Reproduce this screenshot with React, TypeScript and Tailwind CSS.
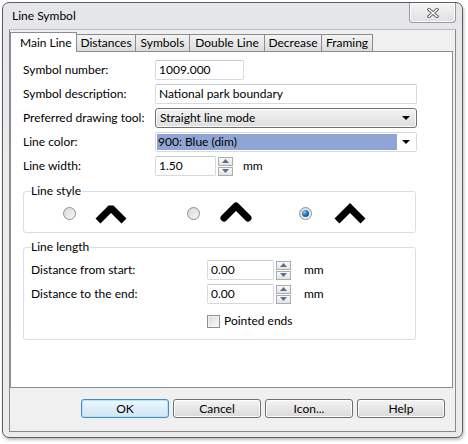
import React from "react";

const tabs = ["Main Line", "Distances", "Symbols", "Double Line", "Decrease", "Framing"];
const tabWidths = ["w-[67px]", "w-[60px]", "w-[55px]", "w-[76px]", "w-[58px]", "w-[52px]"];

const SpinButton = ({ up }: { up?: boolean }) => (
  <div className="w-[15px] h-[9px] border border-[#acacac] bg-linear-to-b from-[#fafafa] to-[#e4e4e4] flex items-center justify-center">
    <svg width="7" height="4" viewBox="0 0 7 4">
      <path d={up ? "M0 4 L3.5 0 L7 4Z" : "M0 0 L3.5 4 L7 0Z"} fill="#5a6e92" />
    </svg>
  </div>
);

const Spinner = () => (
  <div className="flex flex-col gap-[1px] ml-[2px]">
    <SpinButton up />
    <SpinButton />
  </div>
);

const TextBox = ({ value, className }: { value: string; className: string }) => (
  <div
    className={`h-[20px] border border-[#d6dae0] border-t-[#c3c7ce] bg-white pl-[3px] flex items-center rounded-[2px] ${className}`}
  >
    {value}
  </div>
);

const Radio = ({ checked }: { checked?: boolean }) => (
  <div className="w-[13px] h-[13px] rounded-full border border-[#8f8f8f] bg-linear-to-br from-[#d8d8d8] to-[#f8f8f8] flex items-center justify-center shrink-0">
    {checked && (
      <div className="w-[7px] h-[7px] rounded-full bg-radial-[at_35%_30%] from-[#7fd0ff] via-[#1a6fb8] to-[#0b3f75]" />
    )}
  </div>
);

// the three join styles: bevel, round, miter
const Chevron = ({ join }: { join: "bevel" | "round" | "miter" }) => (
  <svg width="36" height="24" viewBox="0 0 36 24" className="shrink-0">
    <polyline
      points={join === "round" ? "6,18 18,6 30,18" : "5,20 18,7 31,20"}
      fill="none"
      stroke="#000"
      strokeWidth="7"
      strokeLinejoin={join}
      strokeLinecap={join === "round" ? "round" : "butt"}
      strokeMiterlimit={4}
    />
  </svg>
);

const DialogButton = ({ label, primary }: { label: string; primary?: boolean }) => (
  <button
    className={`w-[88px] h-[19px] rounded-[3px] border flex items-center justify-center text-[12px] leading-none ${
      primary
        ? "border-[#3c8fc8] bg-linear-to-b from-[#eef7fd] to-[#cfe6f5] shadow-[inset_0_0_0_1px_#b6e2f8]"
        : "border-[#707070] bg-linear-to-b from-[#f4f4f4] to-[#d9d9d9] shadow-[inset_0_0_0_1px_#fcfcfc]"
    }`}
  >
    {label}
  </button>
);

const GroupBox = ({ title, className, children }: { title: string; className: string; children: React.ReactNode }) => (
  <div className={`relative border border-[#d5dfe5] rounded-[3px] ${className}`}>
    <span className="absolute -top-[9px] left-[7px] bg-white leading-[16px] pr-[1px]">{title}</span>
    {children}
  </div>
);

export default function App() {
  return (
    <div className="w-[468px] h-[444px] bg-white pt-[2px] pl-[2px] font-['Lato','Liberation_Sans',sans-serif] text-[12px] text-black">
      <div className="w-[461px] h-[436px] rounded-[7px] border border-[#5d5d5d] bg-linear-to-b from-[#e4e6e9] via-[#ececec] to-[#ebebeb] shadow-[1px_2px_3px_rgba(0,0,0,0.25)] flex flex-col">
        {/* title bar */}
        <div className="h-[26px] flex items-start justify-between">
          <span className="pl-[9px] pt-[5px] leading-[16px]">Line Symbol</span>
          <div className="mr-[6px] w-[47px] h-[20px] border border-t-0 border-[#9a9a9a] rounded-b-[4px] bg-linear-to-b from-[#f5f5f5] to-[#e0e0e0] shadow-[inset_0_0_0_1px_#fbfbfb] flex items-center justify-center">
            <svg width="12" height="10" viewBox="0 0 12 10">
              <path d="M2 1.5 L10 8.5 M10 1.5 L2 8.5" stroke="#5c6270" strokeWidth="3.2" strokeLinecap="square" />
              <path d="M2 1.5 L10 8.5 M10 1.5 L2 8.5" stroke="#ffffff" strokeWidth="1.4" strokeLinecap="square" />
            </svg>
          </div>
        </div>

        {/* client area */}
        <div className="ml-[6px] w-[447px] h-[403px] border border-[#8a8a8a] border-t-[#bdbdbd] bg-[#f0f0f0] flex flex-col">
          <div className="pt-[2px] w-[443px]">
            {/* tab strip */}
            <div className="h-[19px] flex items-end">
              {tabs.map((t, i) =>
                i === 0 ? (
                  <div
                    key={t}
                    className={`${tabWidths[i]} h-[20px] -mb-[1px] relative z-10 border border-b-0 border-[#898c95] bg-white pl-[9px] flex items-center`}
                  >
                    {t}
                  </div>
                ) : (
                  <div
                    key={t}
                    className={`${tabWidths[i]} h-[17px] -ml-[1px] border border-b-0 border-[#898c95] bg-linear-to-b from-[#f4f4f4] to-[#dcdcdc] flex items-center justify-center`}
                  >
                    {t}
                  </div>
                )
              )}
            </div>

            {/* tab panel */}
            <div className="h-[337px] border border-[#898c95] bg-white pl-[12px] pt-[8px]">
              <div className="grid grid-cols-[132px_auto] gap-y-[4px] items-center">
                <span>Symbol number:</span>
                <TextBox value="1009.000" className="w-[89px]" />

                <span>Symbol description:</span>
                <TextBox value="National park boundary" className="w-[262px]" />

                <span>Preferred drawing tool:</span>
                <div className="w-[262px] h-[20px] border border-[#707070] rounded-[3px] bg-linear-to-b from-[#f3f3f3] to-[#dddddd] shadow-[inset_0_0_0_1px_#fbfbfb] pl-[4px] pr-[6px] flex items-center justify-between">
                  <span>Straight line mode</span>
                  <svg width="8" height="4" viewBox="0 0 8 4">
                    <path d="M0 0 L8 0 L4 4Z" fill="#000" />
                  </svg>
                </div>

                <span>Line color:</span>
                <div className="w-[262px] h-[20px] border border-[#d6dae0] bg-white pl-[1px] pr-[6px] flex items-center justify-between rounded-[2px]">
                  <div className="w-[240px] h-[16px] bg-[#8fa6d5] pl-[1px] flex items-center">900: Blue (dim)</div>
                  <svg width="8" height="4" viewBox="0 0 8 4">
                    <path d="M0 0 L8 0 L4 4Z" fill="#000" />
                  </svg>
                </div>

                <span>Line width:</span>
                <div className="flex items-center">
                  <TextBox value="1.50" className="w-[61px]" />
                  <Spinner />
                  <span className="ml-[10px]">mm</span>
                </div>
              </div>

              <GroupBox title="Line style" className="mt-[15px] w-[393px] h-[42px] flex items-center pt-[2px]">
                <div className="ml-[39px]">
                  <Radio />
                </div>
                <div className="ml-[17px]">
                  <Chevron join="bevel" />
                </div>
                <div className="ml-[58px]">
                  <Radio />
                </div>
                <div className="ml-[18px] -mt-[2px]">
                  <Chevron join="round" />
                </div>
                <div className="ml-[45px]">
                  <Radio checked />
                </div>
                <div className="ml-[20px] -mt-[1px]">
                  <Chevron join="miter" />
                </div>
              </GroupBox>

              <GroupBox title="Line length" className="mt-[14px] w-[393px] h-[93px] pl-[7px] pt-[12px]">
                <div className="grid grid-cols-[176px_auto] gap-y-[4px] items-center">
                  <span>Distance from start:</span>
                  <div className="flex items-center">
                    <TextBox value="0.00" className="w-[67px]" />
                    <Spinner />
                    <span className="ml-[13px]">mm</span>
                  </div>
                  <span>Distance to the end:</span>
                  <div className="flex items-center">
                    <TextBox value="0.00" className="w-[67px]" />
                    <Spinner />
                    <span className="ml-[13px]">mm</span>
                  </div>
                  <span />
                  <div className="flex items-center h-[20px] mt-[3px]">
                    <div className="w-[13px] h-[13px] border border-[#8f8f8f] bg-linear-to-br from-[#dcdcdc] to-[#fafafa] shadow-[inset_0_0_0_1px_#f4f4f4]" />
                    <span className="ml-[4px]">Pointed ends</span>
                  </div>
                </div>
              </GroupBox>
            </div>
          </div>

          {/* dialog buttons */}
          <div className="mt-[11px] pr-[10px] flex justify-end gap-[4px]">
            <DialogButton label="OK" primary />
            <DialogButton label="Cancel" />
            <DialogButton label="Icon..." />
            <DialogButton label="Help" />
          </div>
        </div>
      </div>
    </div>
  );
}
